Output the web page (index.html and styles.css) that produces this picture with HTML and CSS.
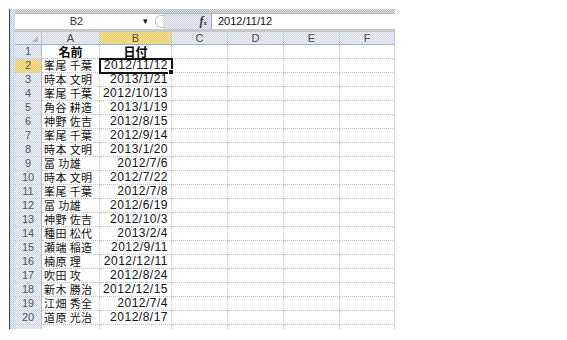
FILE: index.html
```html
<!DOCTYPE html>
<html lang="ja">
<head>
    <meta charset="UTF-8">
    <title>Book1</title>
    <link rel="stylesheet" href="styles.css">
</head>
<body>

    <div class="window">
        <div class="edge"></div>
        <div class="sheet">

            <!-- Formula bar -->
            <div class="formula">
                <div class="fbar">
                    <div class="namebox">B2</div>
                    <div class="drop">&#9662;</div>
                    <div class="grip"></div>
                    <div class="fx"><i>f</i><small>x</small></div>
                    <div class="input">2012/11/12</div>
                </div>
            </div>

            <!-- Cells -->
            <div class="grid">
                <div class="row head">
                    <div class="rh corner"></div>
                    <div>A</div><div class="sel">B</div><div>C</div><div>D</div><div>E</div><div>F</div>
                </div>
                <div class="row">
                    <div class="rh">1</div>
                    <div class="title">名前</div><div class="title">日付</div><div></div><div></div><div></div><div></div>
                </div>
                <div class="row">
                    <div class="rh sel">2</div>
                    <div class="name">峯尾 千葉</div><div class="date active">2012/11/12</div><div></div><div></div><div></div><div></div>
                </div>
                <div class="row">
                    <div class="rh">3</div>
                    <div class="name">時本 文明</div><div class="date">2013/1/21</div><div></div><div></div><div></div><div></div>
                </div>
                <div class="row">
                    <div class="rh">4</div>
                    <div class="name">峯尾 千葉</div><div class="date">2012/10/13</div><div></div><div></div><div></div><div></div>
                </div>
                <div class="row">
                    <div class="rh">5</div>
                    <div class="name">角谷 耕造</div><div class="date">2013/1/19</div><div></div><div></div><div></div><div></div>
                </div>
                <div class="row">
                    <div class="rh">6</div>
                    <div class="name">神野 佐吉</div><div class="date">2012/8/15</div><div></div><div></div><div></div><div></div>
                </div>
                <div class="row">
                    <div class="rh">7</div>
                    <div class="name">峯尾 千葉</div><div class="date">2012/9/14</div><div></div><div></div><div></div><div></div>
                </div>
                <div class="row">
                    <div class="rh">8</div>
                    <div class="name">時本 文明</div><div class="date">2013/1/20</div><div></div><div></div><div></div><div></div>
                </div>
                <div class="row">
                    <div class="rh">9</div>
                    <div class="name">冨 功雄</div><div class="date">2012/7/6</div><div></div><div></div><div></div><div></div>
                </div>
                <div class="row">
                    <div class="rh">10</div>
                    <div class="name">時本 文明</div><div class="date">2012/7/22</div><div></div><div></div><div></div><div></div>
                </div>
                <div class="row">
                    <div class="rh">11</div>
                    <div class="name">峯尾 千葉</div><div class="date">2012/7/8</div><div></div><div></div><div></div><div></div>
                </div>
                <div class="row">
                    <div class="rh">12</div>
                    <div class="name">冨 功雄</div><div class="date">2012/6/19</div><div></div><div></div><div></div><div></div>
                </div>
                <div class="row">
                    <div class="rh">13</div>
                    <div class="name">神野 佐吉</div><div class="date">2012/10/3</div><div></div><div></div><div></div><div></div>
                </div>
                <div class="row">
                    <div class="rh">14</div>
                    <div class="name">種田 松代</div><div class="date">2013/2/4</div><div></div><div></div><div></div><div></div>
                </div>
                <div class="row">
                    <div class="rh">15</div>
                    <div class="name">瀬端 稲造</div><div class="date">2012/9/11</div><div></div><div></div><div></div><div></div>
                </div>
                <div class="row">
                    <div class="rh">16</div>
                    <div class="name">楠原 理</div><div class="date">2012/12/11</div><div></div><div></div><div></div><div></div>
                </div>
                <div class="row">
                    <div class="rh">17</div>
                    <div class="name">吹田 攻</div><div class="date">2012/8/24</div><div></div><div></div><div></div><div></div>
                </div>
                <div class="row">
                    <div class="rh">18</div>
                    <div class="name">新木 勝治</div><div class="date">2012/12/15</div><div></div><div></div><div></div><div></div>
                </div>
                <div class="row">
                    <div class="rh">19</div>
                    <div class="name">江畑 秀全</div><div class="date">2012/7/4</div><div></div><div></div><div></div><div></div>
                </div>
                <div class="row">
                    <div class="rh">20</div>
                    <div class="name">道原 光治</div><div class="date">2012/8/17</div><div></div><div></div><div></div><div></div>
                </div>
                <div class="row">
                    <div class="rh"></div>
                    <div></div><div></div><div></div><div></div><div></div><div></div>
                </div>
            </div>

        </div>
    </div>

</body>
</html>
```

FILE: styles.css
```css
body {
    margin: 0;
    background-color: white;
    font-family: "Liberation Sans", "Noto Sans CJK JP", sans-serif;
    color: #222;
}

.window {
    display: flex;
    width: 386px;
    margin: 9px 0 0 9px;
    border-left: 1px solid #3c3c3c;
}

.edge {
    width: 5px;
    background: repeating-conic-gradient(#b9cde6 0 25%, #e3ecf7 0 50%) 0 0 / 2px 2px;
}

.sheet {
    width: 380px;
}

/* Formula bar */
.formula {
    padding-top: 4px;
    background: repeating-conic-gradient(#a9b3bd 0 25%, #e4e7ea 0 50%) 0 0 / 2px 2px;
    border-bottom: 3px solid #c4c8ce;
}

.fbar {
    display: flex;
    height: 15px;
    background-color: white;
    border-top: 1px solid #b4b0d0;
    font-size: 11px;
    line-height: 14px;
}

.namebox {
    width: 123px;
    text-align: center;
    color: #333;
}

.drop {
    width: 15px;
    font-size: 9px;
    text-align: center;
    color: #111;
}

.grip {
    width: 10px;
    position: relative;
    background-color: white;
}

.grip::before {
    content: "";
    position: absolute;
    left: 2px;
    top: 1px;
    width: 9px;
    height: 11px;
    border: 1px solid #c0c0c8;
    border-right: none;
    border-radius: 6px 0 0 6px;
}

.fx {
    width: 48px;
    text-align: right;
    padding-right: 4px;
    box-sizing: border-box;
    background: repeating-conic-gradient(#c9d0da 0 25%, #eef0f3 0 50%) 0 0 / 2px 2px;
    font-family: "Liberation Serif", serif;
    font-weight: bold;
    color: #333;
}

.fx i {
    font-size: 12px;
}

.fx small {
    font-size: 7px;
}

.input {
    flex: 1;
    padding-left: 6px;
    border-left: 1px solid #a8acb4;
    color: #111;
}

/* Grid */
.grid {
    height: 297px;
    overflow: hidden;
}

.row {
    display: grid;
    grid-template-columns: 27px 58px 72px 56px 56px 56px 55px;
    height: 14px;
}

.row > div {
    box-sizing: border-box;
    border-right: 1px dotted #c2c2c2;
    border-bottom: 1px dotted #c2c2c2;
    font-size: 12px;
    line-height: 13px;
    white-space: nowrap;
}

.row.head {
    height: 13px;
}

.row.head > div {
    background: repeating-conic-gradient(#d0d7e2 0 25%, #f1f3f6 0 50%) 0 0 / 2px 2px;
    border-right: 1px dotted #a9b6cc;
    border-bottom: 1px solid #9fb2cc;
    text-align: center;
    color: #4a4a4a;
    font-size: 11px;
    line-height: 12px;
}

.row .rh {
    background: repeating-conic-gradient(#d0d7e2 0 25%, #f1f3f6 0 50%) 0 0 / 2px 2px;
    border-right: 1px solid #aebbd0;
    border-bottom: 1px dotted #b8c2d2;
    text-align: center;
    color: #555;
    font-size: 11px;
}

.row > div.sel {
    background: repeating-conic-gradient(#f5c258 0 25%, #fde7a6 0 50%) 0 0 / 2px 2px;
}

.corner {
    position: relative;
}

.corner::after {
    content: "";
    position: absolute;
    right: 3px;
    bottom: 2px;
    border-left: 6px solid transparent;
    border-bottom: 6px solid #b4b9c0;
}

.title {
    text-align: center;
    font-weight: bold;
    font-family: "Noto Sans CJK JP", sans-serif;
    color: #000;
}

.name {
    padding-left: 2px;
    font-family: "Noto Sans CJK JP", sans-serif;
    font-size: 11px;
    letter-spacing: 0.4px;
    color: #111;
}

.row > div.name {
    font-size: 11px;
}

.date {
    text-align: right;
    padding-right: 3px;
    letter-spacing: 0.5px;
    color: #111;
}

.row > div.active {
    position: relative;
    outline: 2px solid #111;
    outline-offset: -1px;
    z-index: 1;
}

.active::after {
    content: "";
    position: absolute;
    right: -3px;
    bottom: -3px;
    width: 4px;
    height: 4px;
    background-color: #111;
    border: 1px solid white;
}
```
